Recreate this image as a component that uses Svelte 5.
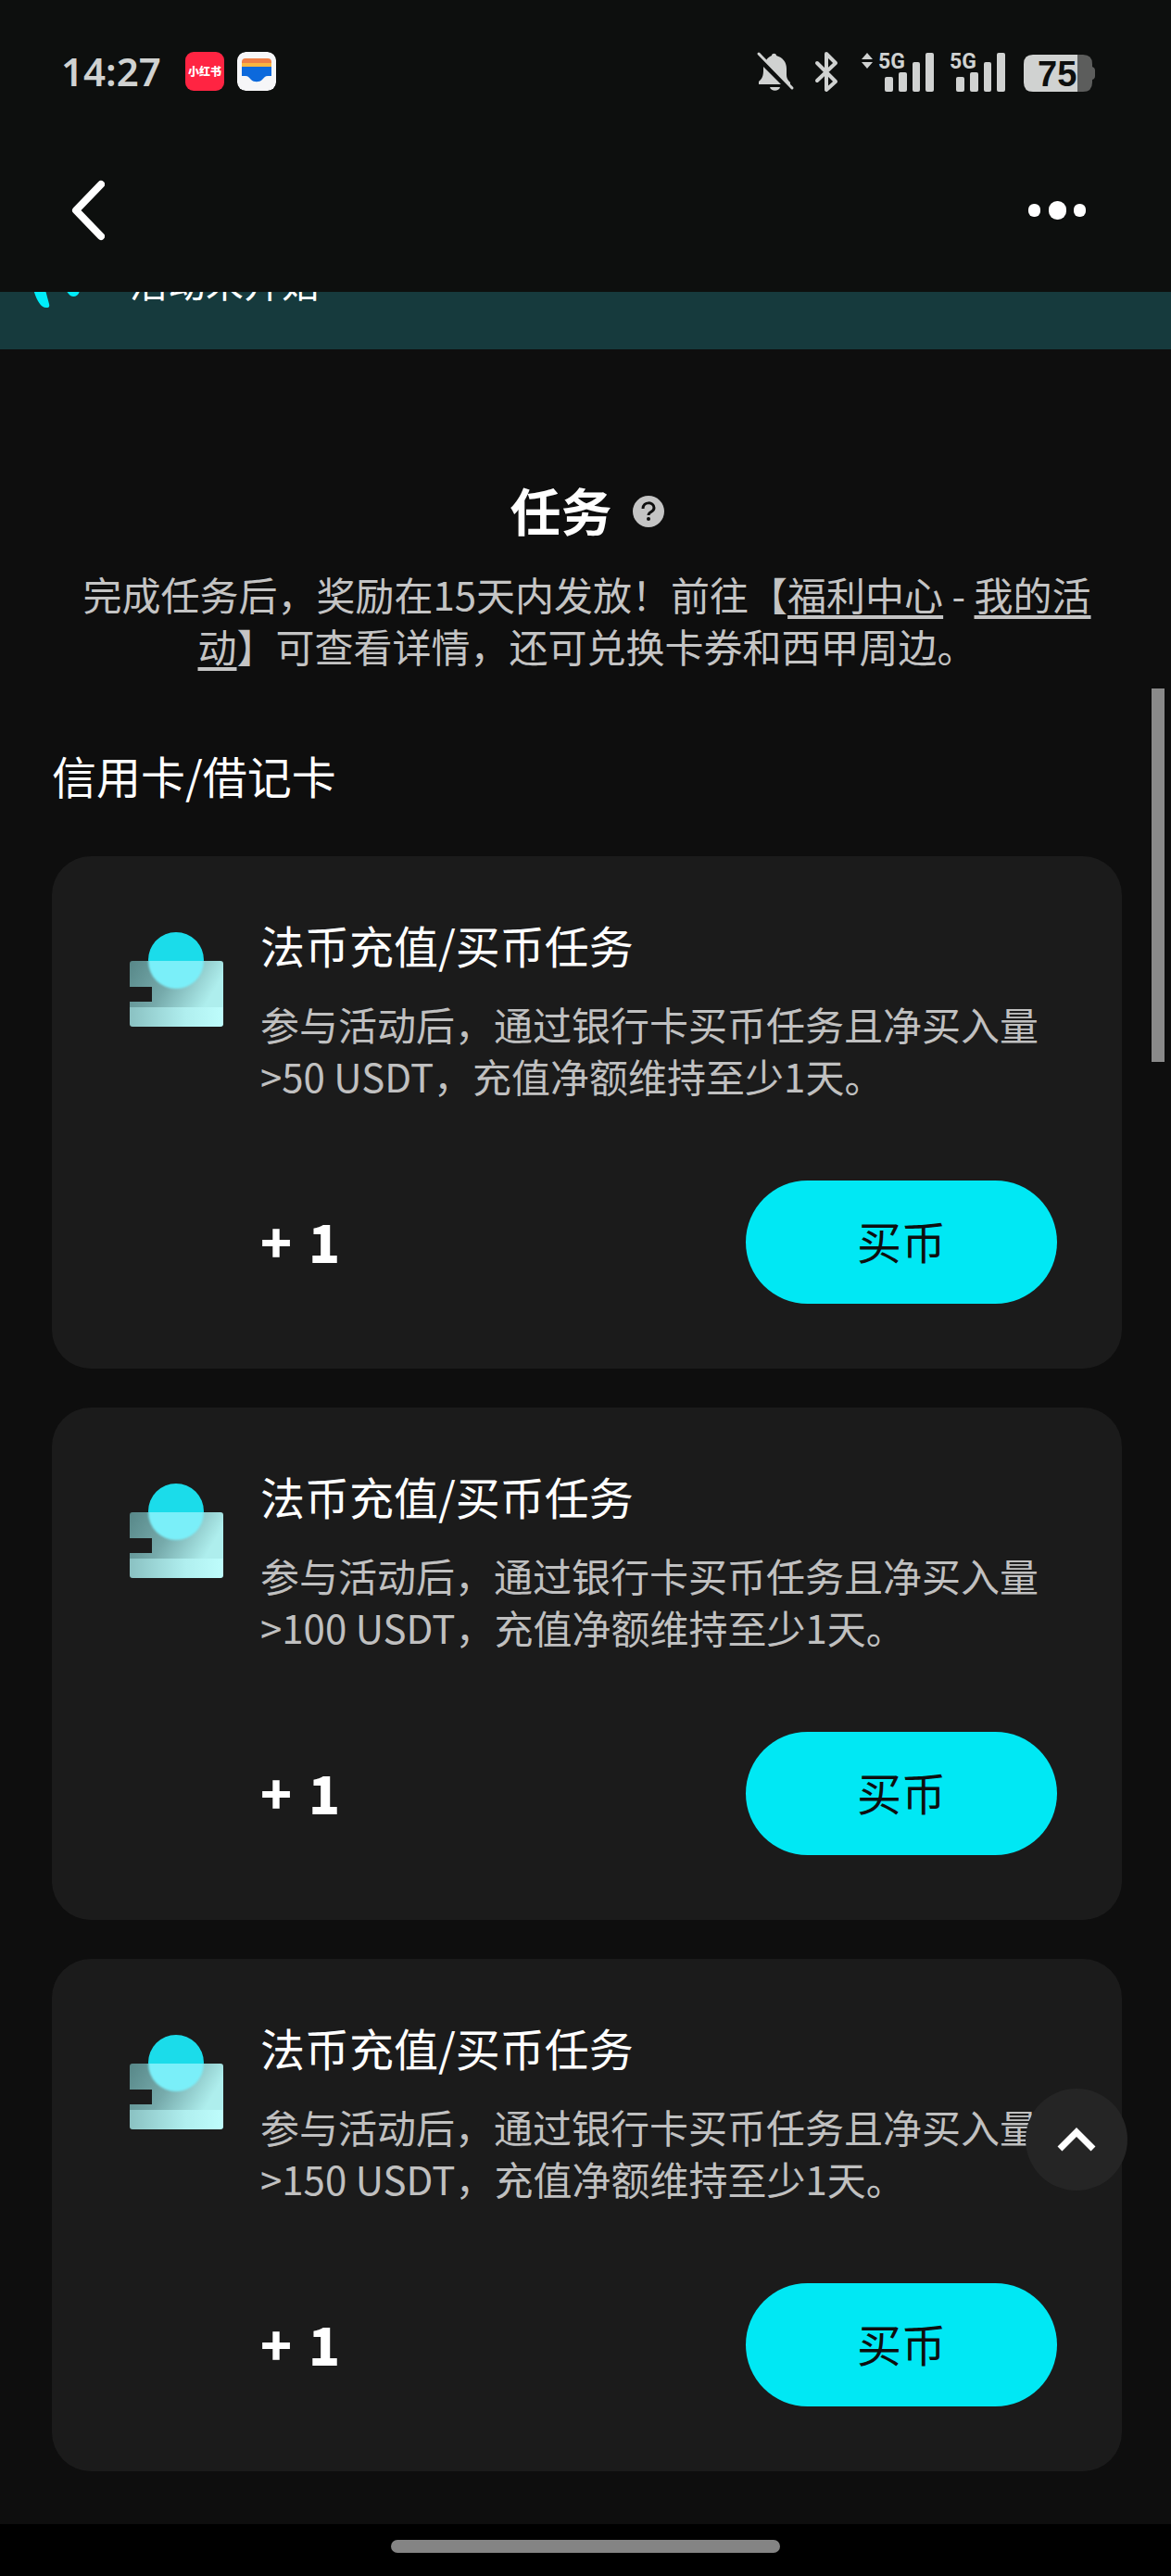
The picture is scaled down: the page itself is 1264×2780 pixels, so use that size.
<script>
  const tasks = [50, 100, 150].map((amount) => ({
    amount,
    title: '法币充值/买币任务',
    reward: 1
  }));
</script>

<div class="page">
  <header>
    <div class="status">
      <div class="side">
        <time>14:27</time>
        <span class="app red">小红书</span>
        <svg class="app" viewBox="0 0 42 42" aria-hidden="true">
          <rect width="42" height="42" rx="9" fill="#f6f6f8" />
          <path d="M5 11a4 4 0 0 1 4-4h24a4 4 0 0 1 4 4v8H5z" fill="#f07f45" />
          <path d="M5 12h32v6H5z" fill="#fbb540" />
          <path d="M5 16h32v10h-4c-3 0-4 2-6 4-3 3-9 3-12 0-2-2-3-4-6-4H5z" fill="#0c69dc" />
        </svg>
      </div>
      <svg class="indicators" viewBox="0 0 366 48" aria-label="静音 蓝牙 5G 电量 75">
        <g fill="#d0d2d1">
          <!-- muted bell -->
          <path d="M11 12c2-3 4-4 6-5 0-3 5-3 5 0 7 2 11 7 11 14v7c0 3 1 5 4 8v3h-2z" />
          <path d="M8 19 27 38H3v-3c4-3 5-7 5-12z" />
          <path d="M15 41h11c-1 5-10 5-11 0z" />
          <path d="M3 5 39 42" stroke="#d0d2d1" stroke-width="3" stroke-linecap="round" />
          <!-- bluetooth -->
          <path d="M66 15 86 35 76 44V5L86 15 66 34" fill="none" stroke="#d0d2d1" stroke-width="4" stroke-linejoin="round" stroke-linecap="round" />
          <!-- data arrows -->
          <path d="m114 11 6-7 6 7zM114 14h12l-6 7z" />
          <text x="132" y="21" class="net">5G</text>
          <rect x="139" y="30" width="9" height="16" rx="2" />
          <rect x="154" y="25" width="9" height="21" rx="2" />
          <rect x="169" y="14" width="8" height="32" rx="2" />
          <rect x="183" y="4" width="9" height="42" rx="2" />
          <text x="209" y="21" class="net">5G</text>
          <rect x="216" y="30" width="9" height="16" rx="2" />
          <rect x="231" y="25" width="9" height="21" rx="2" />
          <rect x="246" y="14" width="8" height="32" rx="2" />
          <rect x="260" y="4" width="9" height="42" rx="2" />
          <!-- battery -->
          <path d="M347 6h6q10 0 10 10v3q3 1 3 4v6q0 3-3 4v3q0 10-10 10h-6z" fill="#5c5d5c" />
          <path d="M299 6h48v40h-48q-10 0-10-10V16q0-10 10-10z" />
        </g>
        <text x="304" y="40" class="charge">75</text>
      </svg>
    </div>
    <nav>
      <button class="icon-button" aria-label="返回">
        <svg width="36" height="72" viewBox="0 0 36 72"><path d="M32 8 5 36l27 28" fill="none" stroke="#fff" stroke-width="8" stroke-linecap="round" stroke-linejoin="round" /></svg>
      </button>
      <button class="icon-button" aria-label="更多">
        <svg width="62" height="20" viewBox="0 0 62 20" fill="#fff"><rect y="3" width="13" height="14" rx="6" /><rect x="22" width="19" height="20" rx="9" /><rect x="49" y="3" width="13" height="14" rx="6" /></svg>
      </button>
    </nav>
  </header>

  <div class="banner">
    <svg width="54" height="44" viewBox="0 0 54 44" aria-hidden="true"><path d="M0 10h11c2 8 4 15 8 30 1 4-1 4-3 4-8 0-13-14-16-28z" fill="#00edfa" /><path d="M36 24h16c0 9-9 10-12 5z" fill="#00edfa" /></svg>
    <span>活动未开始</span>
  </div>

  <main>
    <div class="heading">
      <h1>任务</h1>
      <button class="icon-button help" aria-label="帮助">
        <svg width="34" height="34" viewBox="0 0 34 34"><circle cx="17" cy="17" r="17" fill="#c4c4c4" /><path d="M11 14c0-8 12-8 12-1 0 5-6 4-6 8" fill="none" stroke="#0e0e0e" stroke-width="3" /><circle cx="17" cy="25" r="2" fill="#0e0e0e" /></svg>
      </button>
    </div>
    <p class="intro">完成任务后，奖励在15天内发放！前往【<a href="#rewards">福利中心</a> - <a href="#events">我的活动</a>】可查看详情，还可兑换卡券和西甲周边。</p>
    <h2>信用卡/借记卡</h2>
    <div class="cards">
      {#each tasks as task}
        <article>
          <svg class="wallet" width="101" height="102" viewBox="0 0 101 102" aria-hidden="true">
            <defs>
              <linearGradient id="glass{task.amount}" x1="0" x2="1" y1="0" y2="0.3">
                <stop offset="0" stop-color="#578788" /><stop offset="0.5" stop-color="#76aaab" /><stop offset="1" stop-color="#aeeeed" />
              </linearGradient>
              <linearGradient id="base{task.amount}" x1="0" x2="1" y1="0" y2="0">
                <stop offset="0" stop-color="#8ac1c2" /><stop offset="0.6" stop-color="#b0efef" /><stop offset="1" stop-color="#befdfc" />
              </linearGradient>
              <clipPath id="lower{task.amount}"><path d="M0 31h101v51H0z" /></clipPath>
            </defs>
            <circle cx="50" cy="30" r="30" fill="#1bdcea" />
            <path d="M3 31h95q3 0 3 3v48H0V75h24V59H0V34q0-3 3-3z" fill="url(#glass{task.amount})" />
            <path d="M0 81h101v18q0 3-3 3H3q-3 0-3-3z" fill="url(#base{task.amount})" />
            <g clip-path="url(#lower{task.amount})"><circle class="glow" cx="50" cy="31" r="30" fill="#7aeff9" /></g>
          </svg>
          <div class="body">
            <h3>{task.title}</h3>
            <p>参与活动后，通过银行卡买币任务且净买入量&gt;{task.amount} USDT，充值净额维持至少1天。</p>
            <div class="action">
              <strong><span>+</span><span>{task.reward}</span></strong>
              <button class="buy">买币</button>
            </div>
          </div>
        </article>
      {/each}
    </div>
  </main>

  <footer><span></span></footer>
  <div class="scrollbar"></div>
  <button class="to-top" aria-label="返回顶部">
    <svg width="44" height="30" viewBox="0 0 44 30"><path d="m4 25 18-18 18 18" fill="none" stroke="#fff" stroke-width="7" /></svg>
  </button>
</div>

<style>
  :global(body) {
    margin: 0;
    background: #0e0e0e;
  }
  .page {
    position: relative;
    display: flex;
    flex-direction: column;
    min-height: 100vh;
    background: #0e0e0e;
    color: #fff;
    font-family: 'Noto Sans CJK SC', sans-serif;
  }
  h1, h2, h3, p {
    margin: 0;
  }
  button {
    border: 0;
    padding: 0;
    font-family: inherit;
    cursor: pointer;
  }
  svg {
    display: block;
  }
  header {
    background: #0d0f0e;
    padding-bottom: 15px;
  }
  .status, nav, .side {
    display: flex;
    align-items: center;
  }
  .status {
    justify-content: space-between;
    height: 154px;
    padding: 0 82px 0 66px;
  }
  time {
    width: 120px;
    color: #d0d2d1;
    font: 600 42px/56px 'Noto Sans', sans-serif;
  }
  .app {
    width: 42px;
    height: 42px;
    margin-left: 14px;
    border-radius: 9px;
  }
  .red {
    background: #ff2442;
    font-size: 12px;
    font-weight: 900;
    line-height: 42px;
    text-align: center;
  }
  .indicators {
    width: 366px;
    height: 48px;
  }
  .net {
    font: 700 23px Roboto, sans-serif;
  }
  .charge {
    fill: #0d0f0e;
    font: 700 38px 'Liberation Sans', sans-serif;
  }
  nav {
    justify-content: space-between;
    height: 146px;
    padding: 0 92px 0 77px;
  }
  .icon-button {
    background: none;
  }
  .banner {
    display: flex;
    align-items: flex-end;
    gap: 52px;
    height: 62px;
    padding-left: 34px;
    overflow: hidden;
    background: #163a3d;
    font-size: 41px;
    line-height: 56px;
  }
  .banner svg {
    margin-bottom: 45px;
  }
  .banner span {
    margin-bottom: 46px;
  }
  main {
    padding: 136px 53px 57px 56px;
  }
  .heading {
    display: flex;
    align-items: center;
    justify-content: center;
    gap: 22px;
  }
  h1 {
    font-size: 55px;
    line-height: 72px;
  }
  .help {
    padding-top: 6px;
  }
  .intro {
    padding: 28px 28px 0;
    color: #c4c4c4;
    font-size: 42px;
    line-height: 56px;
    text-align: center;
  }
  .intro a {
    color: inherit;
    text-decoration-thickness: 4px;
    text-underline-offset: 5px;
  }
  h2 {
    margin-top: 79px;
    font-size: 48px;
    font-weight: 400;
    line-height: 64px;
  }
  .cards {
    display: grid;
    gap: 42px;
    margin-top: 56px;
  }
  article {
    display: flex;
    align-items: flex-start;
    gap: 40px;
    padding: 63px 70px 70px 84px;
    border-radius: 42px;
    background: #1b1b1b;
  }
  .wallet {
    flex: none;
    margin-top: 19px;
  }
  .glow {
    filter: blur(1px);
  }
  .body {
    flex: 1;
  }
  h3 {
    font-size: 48px;
    font-weight: 400;
    line-height: 64px;
  }
  .body p {
    margin-top: 26px;
    color: #c0c0c0;
    font-size: 42px;
    line-height: 56px;
  }
  .action {
    display: flex;
    align-items: center;
    justify-content: space-between;
    margin-top: 85px;
  }
  strong {
    display: flex;
    gap: 18px;
    padding-bottom: 4px;
    font-size: 56px;
    font-weight: 900;
    line-height: 72px;
  }
  .buy {
    width: 336px;
    height: 133px;
    padding-bottom: 6px;
    border-radius: 67px;
    background: #00e8f4;
    color: #0e0e0e;
    font-size: 48px;
  }
  footer {
    display: flex;
    align-items: flex-start;
    justify-content: center;
    height: 39px;
    margin-top: auto;
    padding-top: 17px;
    background: #000;
  }
  footer span {
    width: 420px;
    height: 14px;
    border-radius: 7px;
    background: #848484;
  }
  .scrollbar {
    position: absolute;
    top: 743px;
    right: 7px;
    width: 14px;
    height: 403px;
    background: #8a8a8a;
  }
  .to-top {
    position: absolute;
    right: 47px;
    bottom: 416px;
    display: grid;
    place-items: center;
    width: 110px;
    height: 110px;
    border-radius: 50%;
    background: #252525;
  }
</style>
